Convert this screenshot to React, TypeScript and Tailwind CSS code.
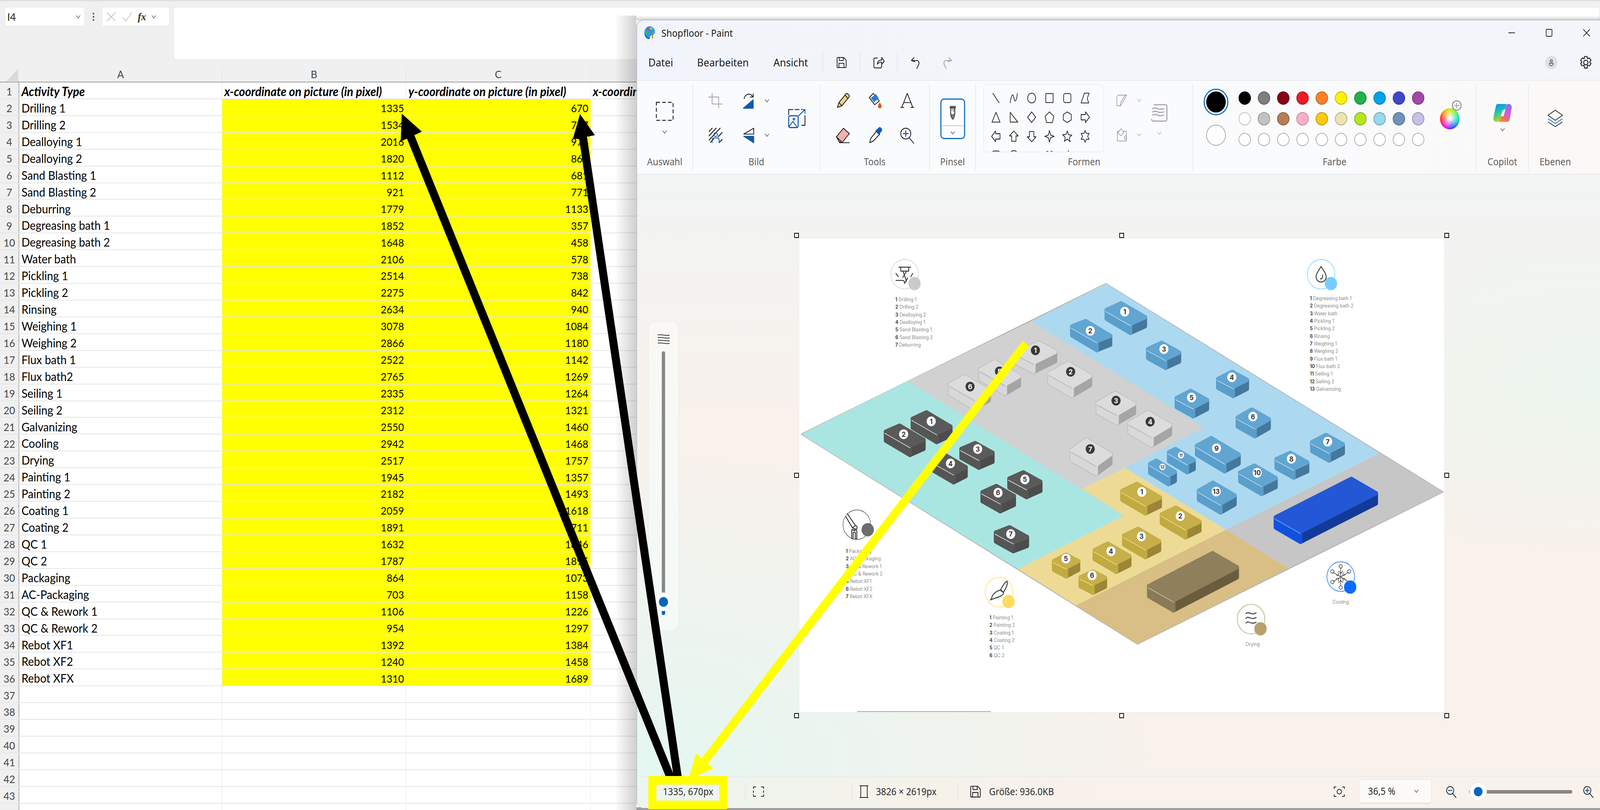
import { ReactNode } from 'react';

const SHEET = [
  ['Drilling 1', 1335, 670], ['Drilling 2', 1534, 757], ['Dealloying 1', 2016, 974], ['Dealloying 2', 1820, 868],
  ['Sand Blasting 1', 1112, 681], ['Sand Blasting 2', 921, 771], ['Deburring', 1779, 1133], ['Degreasing bath 1', 1852, 357],
  ['Degreasing bath 2', 1648, 458], ['Water bath', 2106, 578], ['Pickling 1', 2514, 738], ['Pickling 2', 2275, 842],
  ['Rinsing', 2634, 940], ['Weighing 1', 3078, 1084], ['Weighing 2', 2866, 1180], ['Flux bath 1', 2522, 1142],
  ['Flux bath2', 2765, 1269], ['Seiling 1', 2335, 1264], ['Seiling 2', 2312, 1321], ['Galvanizing', 2550, 1460],
  ['Cooling', 2942, 1468], ['Drying', 2517, 1757], ['Painting 1', 1945, 1357], ['Painting 2', 2182, 1493],
  ['Coating 1', 2059, 1618], ['Coating 2', 1891, 1711], ['QC 1', 1632, 1846], ['QC 2', 1787, 1895],
  ['Packaging', 864, 1073], ['AC-Packaging', 703, 1158], ['QC & Rework 1', 1106, 1226], ['QC & Rework 2', 954, 1297],
  ['Rebot XF1', 1392, 1384], ['Rebot XF2', 1240, 1458], ['Rebot XFX', 1310, 1689],
] as const;

const COLORS = [
  '#000000', '#7f7f7f', '#880015', '#ed1c24', '#ff7f27', '#fff200', '#22b14c', '#00a2e8', '#3f48cc', '#a349a4',
  '#ffffff', '#c3c3c3', '#b97a57', '#ffaec9', '#ffc90e', '#efe4b0', '#b5e61d', '#99d9ea', '#7092be', '#c8bfe7',
];

const SHAPES = [
  'M5 3L23 25', 'M4 25C7 6 12 2 14 13S21 24 24 3', 'M14 3a11 11 0 1 0 .01 0', 'M4 4h20v20H4z',
  'M8 4h12a4 4 0 0 1 4 4v12a4 4 0 0 1-4 4H8a4 4 0 0 1-4-4V8a4 4 0 0 1 4-4z', 'M12 3h13l-5 12 4 10H3z',
  'M14 3L25 25H3z', 'M4 3L25 25H4z', 'M14 2L25 14 14 26 3 14z', 'M14 2L26 12 22 26H6L2 12z', 'M14 2L25 8v12L14 26 3 20V8z',
  'M3 8h12V2l11 12-11 12v-6H3z', 'M25 8H13V2L2 14l11 12v-6h12z', 'M8 25V13H2L14 2l12 11h-6v12z', 'M8 3v12H2l12 11 12-11h-6V3z',
  'M14 1l3 10 10 3-10 3-3 10-3-10-10-3 10-3z', 'M14 2l3.5 8.5 9 .7-7 5.8 2.2 8.8L14 20l-7.7 5 2.2-8.8-7-5.8 9-.7z',
  'M14 1l3.5 6.5H25L21 14l4 6.5h-7.5L14 27l-3.5-6.5H3L7 14 3 7.5h7.5z',
  'M8 4h12a4 4 0 0 1 4 4v12H4V8a4 4 0 0 1 4-4z', 'M14 3a11 9 0 1 0 .01 0', 'M8 12a6 6 0 0 1 12 0v12H8z', 'M14 10C10 2 2 4 4 12c1 5 6 9 10 13 4-4 9-8 10-13 2-8-6-10-10-2z', 'M18 3L8 15h6l-4 10',
];

type Tone = 'gray' | 'dark' | 'blue' | 'gold' | 'navy' | 'brown';

const TONES: Record<Tone, { top: string; left: string; right: string; line: string; disc: string; num: string }> = {
  gray: { top: '#dcdcdc', left: '#d8d8d8', right: '#a5a5a5', line: '#ababab', disc: '#3a3a3a', num: '#ffffff' },
  dark: { top: '#5a5a5a', left: '#555555', right: '#4c4c4c', line: '#e8e8e8', disc: '#ffffff', num: '#333333' },
  blue: { top: '#61a5d1', left: '#5a9ecb', right: '#44789c', line: '#c2e4f7', disc: '#ffffff', num: '#333333' },
  gold: { top: '#c7af49', left: '#c2aa42', right: '#9c8536', line: '#f3e07e', disc: '#ffffff', num: '#333333' },
  navy: { top: '#2457d5', left: '#1151dc', right: '#123a98', line: '#6db0ff', disc: '#ffffff', num: '#333333' },
  brown: { top: '#8f7f5a', left: '#8a7a55', right: '#6a5d3e', line: '#d3c8a2', disc: '#ffffff', num: '#333333' },
};

// tone, label, left corner x/y, top corner x/y, right corner x, label x/y
type Box = [Tone, string, number, number, number, number, number, number, number];

const BOXES: Box[] = [
  ['gray', '1', 2786, 904, 2855, 869, 2907, 2845, 895],
  ['gray', '2', 2877, 955, 2933, 921, 3003, 2942, 950],
  ['gray', '5', 2687, 944, 2729, 918, 2807, 2746, 949],
  ['gray', '6', 2603, 982, 2646, 956, 2724, 2665, 988],
  ['gray', '3', 3010, 1031, 3064, 998, 3124, 3067, 1024],
  ['gray', '4', 3097, 1082, 3153, 1047, 3223, 3161, 1078],
  ['gray', '7', 2938, 1151, 2982, 1118, 3059, 2996, 1148],
  ['dark', '1', 2499, 1069, 2541, 1047, 2619, 2558, 1077],
  ['dark', '2', 2425, 1102, 2467, 1081, 2545, 2482, 1110],
  ['dark', '3', 2633, 1147, 2677, 1125, 2735, 2686, 1148],
  ['dark', '4', 2558, 1180, 2596, 1158, 2661, 2611, 1185],
  ['dark', '5', 2765, 1223, 2810, 1200, 2867, 2816, 1226],
  ['dark', '6', 2691, 1258, 2735, 1235, 2794, 2742, 1260],
  ['dark', '7', 2728, 1361, 2772, 1341, 2830, 2777, 1366],
  ['blue', '1', 3033, 790, 3078, 767, 3155, 3091, 796],
  ['blue', '2', 2938, 832, 2979, 813, 3059, 2996, 845],
  ['blue', '3', 3147, 891, 3191, 868, 3249, 3199, 892],
  ['blue', '4', 3340, 968, 3386, 942, 3436, 3386, 964],
  ['blue', '5', 3226, 1017, 3271, 991, 3326, 3275, 1016],
  ['blue', '6', 3394, 1067, 3439, 1039, 3496, 3444, 1065],
  ['blue', '7', 3599, 1130, 3644, 1104, 3700, 3650, 1129],
  ['blue', '8', 3501, 1173, 3545, 1150, 3602, 3550, 1173],
  ['blue', '9', 3282, 1138, 3325, 1113, 3413, 3344, 1146],
  ['blue', '10', 3401, 1207, 3445, 1183, 3515, 3456, 1209],
  ['blue', '11', 3205, 1154, 3226, 1142, 3289, 3246, 1164],
  ['blue', '12', 3153, 1184, 3173, 1172, 3237, 3195, 1194],
  ['blue', '13', 3287, 1254, 3331, 1227, 3402, 3343, 1257],
  ['gold', '1', 3076, 1254, 3121, 1230, 3196, 3138, 1258],
  ['gold', '2', 3185, 1314, 3228, 1291, 3305, 3244, 1320],
  ['gold', '3', 3081, 1369, 3124, 1345, 3194, 3137, 1372],
  ['gold', '4', 3000, 1406, 3041, 1383, 3112, 3053, 1410],
  ['gold', '5', 2888, 1435, 2929, 1411, 2971, 2929, 1429],
  ['gold', '6', 2961, 1477, 3003, 1454, 3045, 3001, 1472],
  ['navy', '', 3499, 1325, 3721, 1219, 3791, 0, 0],
  ['brown', '', 3150, 1501, 3338, 1409, 3408, 0, 0],
];

function Block({ tone, label, lx, ly, tx, ty, rx, nx, ny }: { tone: Tone; label: string; lx: number; ly: number; tx: number; ty: number; rx: number; nx: number; ny: number }) {
  const c = TONES[tone];
  const a = rx - tx;
  const raw = [[lx, ly], [tx, ty], [rx, ty + a * 0.58], [lx + a, ly + a * 0.58]];
  const cx = (lx + rx) / 2;
  const cy = (raw[0][1] + raw[1][1] + raw[2][1] + raw[3][1]) / 4;
  const [L, T, R, F] = raw.map(([x, y]) => {
    const d = Math.hypot(cx - x, cy - y);
    return [x + ((cx - x) * 8) / d, y + ((cy - y) * 8) / d];
  });
  const h = tone === 'navy' || tone === 'brown' ? 26 : 23;
  const pts = (list: number[][]) => list.map((p) => p.join(',')).join(' ');
  const small = label === '11' || label === '12';
  return (
    <g strokeLinejoin="round" strokeWidth={11}>
      {tone === 'gray' && (
        <polygon points={pts([L, T, R, [R[0], R[1] + h], [F[0], F[1] + h], [L[0], L[1] + h]])} fill={c.line} stroke={c.line} strokeWidth={13} />
      )}
      <polygon points={pts([F, R, [R[0], R[1] + h], [F[0], F[1] + h]])} fill={c.right} stroke={c.right} />
      <polygon points={pts([L, F, [F[0], F[1] + h], [L[0], L[1] + h]])} fill={c.left} stroke={c.left} />
      <polygon points={pts([L, T, R, F])} fill={c.top} stroke={c.top} />
      <line x1={L[0] - 3} y1={L[1] + 4} x2={F[0] + 1} y2={F[1] + 5} stroke={c.line} strokeWidth={1.6} />
      {label && (
        <>
          <circle cx={nx} cy={ny} r={small ? 8.5 : 12.5} fill={c.disc} />
          <text x={nx} y={ny + (small ? 4 : 6.5)} textAnchor="middle" fontFamily="Inter, sans-serif" fontWeight={700} fontSize={small ? 11 : 18} fill={c.num}>
            {label}
          </text>
        </>
      )}
    </g>
  );
}

function Ico({ size = 44, box = 32, children, className = '' }: { size?: number; box?: number; children: ReactNode; className?: string }) {
  return (
    <svg width={size} height={size} viewBox={`0 0 ${box} ${box}`} fill="none" stroke="#222" strokeWidth={1.6} strokeLinejoin="round" strokeLinecap="round" className={`shrink-0 ${className}`}>
      {children}
    </svg>
  );
}

function Chevron({ className = '' }: { className?: string }) {
  return (
    <svg width="14" height="10" viewBox="0 0 14 10" fill="none" stroke="#555" strokeWidth="1.5" className={`shrink-0 ${className}`}>
      <path d="M1.5 1.5L7 8l5.5-6.5" />
    </svg>
  );
}

function Group({ width, label, children }: { width: string; label: string; children: ReactNode }) {
  return (
    <div className={`${width} h-[222px] flex flex-col border-r-2 border-[#e9ebee] last:border-r-0 shrink-0`}>
      <div className="h-[176px] flex">{children}</div>
      <div className="h-[46px] flex items-center justify-center text-[24.5px] text-[#5f5f5f]">{label}</div>
    </div>
  );
}

function Sep() {
  return <div className="w-[2px] h-[48px] bg-[#e5e7ea] shrink-0" />;
}

function MarkerIcon() {
  return (
    <Ico size={40} box={28}>
      <path d="M9 3h10v3H9z" fill="#555" stroke="#555" />
      <path d="M10 6v10c0 5 3 9 4 10 1-1 4-5 4-10V6" stroke="#333" />
      <path d="M10.5 16c2 1 5 1 7 0 0 4-2 8-3.500 9.500C12.500 24 10.500 20 10.500 16z" fill="#777" stroke="none" />
      <path d="M13 7v4M16 7v6" stroke="#888" />
    </Ico>
  );
}

function Legend({ className, items }: { className: string; items: string[] }) {
  return (
    <div className={`absolute font-[Inter] text-[12.5px] leading-[19.35px] text-[#8a8a8a] whitespace-nowrap ${className}`}>
      {items.map((t, i) => (
        <div key={t}>
          <span className="font-bold text-[#444]">{i + 1}</span> {t}
        </div>
      ))}
    </div>
  );
}

function Ring({ cx, cy, ring, dot, dx = 27, dy = 24, thin, children }: { cx: number; cy: number; ring: string; dot: string; dx?: number; dy?: number; thin?: boolean; children: ReactNode }) {
  return (
    <g>
      <circle cx={cx} cy={cy} r={38} fill="#fff" stroke={ring} strokeWidth={1.6} />
      <g fill="none" stroke="#444" strokeWidth={thin ? 1.6 : 2.6} strokeLinecap="round" strokeLinejoin="round" transform={`translate(${cx} ${cy})`}>
        {children}
      </g>
      <circle cx={cx + dx} cy={cy + dy} r={17} fill={dot} />
    </g>
  );
}

function FactoryMap() {
  return (
    <svg viewBox="2195 608 1776 1215" className="absolute inset-0 w-full h-full">
      <polygon points="2200,1110 3039,724 3968,1258 3126,1648" fill="#cfcfcf" stroke="#b4b4b4" strokeWidth={3} strokeLinejoin="round" />
      <polygon points="2200,1110 2494,974 3089,1319 2797,1456" fill="#aae6e1" />
      <polygon points="2494,974 2834,820 3309,1093 3092,1196 2973,1250" fill="#d1d1d1" />
      <polygon points="2834,820 3039,724 3794,1159 3370,1355 3092,1196 3309,1093" fill="#acd9f0" />
      <polygon points="2973,1250 3092,1196 3370,1355 2957,1549 2797,1456 3089,1319" fill="#eddb95" />
      <polygon points="3370,1355 3541,1454 3126,1648 2957,1549" fill="#d9be85" />
      <polygon points="3794,1159 3968,1258 3541,1454 3370,1355" fill="#c6c6c6" />
      {BOXES.map(([tone, label, lx, ly, tx, ty, rx, nx, ny]) => (
        <Block key={`${tone}${label}`} tone={tone} label={label} lx={lx} ly={ly} tx={tx} ty={ty} rx={rx} nx={nx} ny={ny} />
      ))}

      <Ring cx={2485} cy={700} ring="#d4d4d4" dot="#cacaca">
        <path d="M-16 -18H16M-11 -18V-8H11V-18M-5 -8L5 18M5 -8L-5 8M-24 -2L-18 6M22 -2L17 6M-24 16H-5C-2 16 0 20 0 24M0 24C0 20 6 14 8 10" />
      </Ring>
      <Ring cx={3632} cy={700} ring="#7fd0ff" dot="#77ccff">
        <path d="M0 -20C-6 -10 -14 -2 -14 6A14 14 0 0 0 14 6C14 -2 6 -10 0 -20ZM4 2C5 8 2 12 -2 12" />
      </Ring>
      <Ring cx={2353} cy={1342} ring="#666666" dot="#6c6c6c" dx={30} dy={13}>
        <path d="M-26 -28L-4 2M-30 -20L-12 8M-4 2L-12 8M-4 2C2 4 2 10 -2 12L-12 8M-7 10V16M-14 36V14C-14 10 -10 14 -7 16C-4 14 0 12 0 16V36H-4V20H-10V36Z" />
      </Ring>
      <Ring cx={2745} cy={1515} ring="#ffdc5e" dot="#ffdc5e" dx={26} dy={24}>
        <path d="M22 -28C24 -24 22 -14 12 0L4 -6C10 -16 16 -26 22 -28ZM3 -5L12 1C12 6 8 8 4 10C-4 14 -14 16 -24 20C-20 18 -20 8 -14 4C-10 0 -4 -4 3 -5Z" />
      </Ring>
      <Ring cx={3686} cy={1475} ring="#1a75ff" dot="#0a6cff" dx={26} dy={27} thin>
        <path d="M0 -22V24M-21 -11L21 13M-21 13L21 -11M-6 -14L0 -8L6 -14M-6 16L0 10L6 16M-12 -4L-5 -2L-7 -10M12 -4L5 -2L7 -10M-12 6L-5 4L-7 12M12 6L5 4L7 12" />
        <circle cx="0" cy="-26" r="4.500" />
        <circle cx="0" cy="28" r="4.500" />
        <circle cx="-23" cy="-13" r="4.500" />
        <circle cx="23" cy="-13" r="4.500" />
        <circle cx="-23" cy="14" r="4.500" />
      </Ring>
      <Ring cx={3439} cy={1584} ring="#b5a570" dot="#b5a26f" dx={26} dy={25}>
        <path d="M-14 -14C-8 -22 0 -8 14 -16M-14 -2C-8 -10 0 4 14 -4M-14 10C-8 2 0 16 14 8" />
      </Ring>
      <line x1="2354" y1="1821" x2="2722" y2="1821" stroke="#888" strokeWidth="1.5" />
    </svg>
  );
}

function PaintWindow() {
  return (
    <div className="absolute left-[1750px] top-[50px] w-[2650px] h-[2018px] rounded-l-[20px] overflow-hidden flex flex-col font-['Noto_Sans',sans-serif] text-[#1c1c1c] border-l-2 border-t-2 border-[#b8bcc0] bg-[#f3f4f6]">
      {/* title bar */}
      <div className="h-[152px] shrink-0 bg-[linear-gradient(90deg,#f1f4fa,#f4f5fb_60%,#f2f5f9)]">
        <div className="h-[64px] flex items-center pl-[18px] pr-[26px]">
          <svg width="34" height="36" viewBox="0 0 34 36" className="shrink-0">
            <path d="M17 1C7 1 2 10 2 18c0 9 6 16 13 16 3 0 2-5 4-8 2-2 5-1 8-3 4-3 5-8 3-13C27 4 22 1 17 1z" fill="#1f9ee8" />
            <path d="M2 18c0 9 6 16 13 16 1 0 1.500-1 2-2-5-2-12-6-15-14z" fill="#0c6bb8" />
            <circle cx="12" cy="9" r="3.500" fill="#e8463f" />
            <circle cx="8" cy="18" r="3.500" fill="#43b649" />
            <circle cx="21" cy="7" r="3" fill="#f5c623" />
            <path d="M27 14l-3 14" stroke="#c98a3d" strokeWidth="3" />
            <path d="M22 27l4 1-1 7z" fill="#a36a2e" />
          </svg>
          <span className="ml-[15px] text-[25px] leading-none">Shopfloor - Paint</span>
          <div className="ml-auto flex items-center gap-[81px]">
            <svg width="22" height="22" viewBox="0 0 22 22" stroke="#222" strokeWidth="1.800" fill="none"><path d="M2 11h18" /></svg>
            <svg width="22" height="22" viewBox="0 0 22 22" stroke="#222" strokeWidth="1.800" fill="none"><rect x="3" y="2" width="16" height="18" rx="2.500" /></svg>
            <svg width="22" height="22" viewBox="0 0 22 22" stroke="#222" strokeWidth="1.800" fill="none"><path d="M2 2l18 18M20 2L2 20" /></svg>
          </div>
        </div>
        <div className="h-[88px] flex items-center pl-[31px] pr-[20px] text-[27.5px]">
          <span className="w-[70px]">Datei</span>
          <span className="ml-[64px] w-[145px]">Bearbeiten</span>
          <span className="ml-[65px] w-[100px]">Ansicht</span>
          <div className="ml-[35px] mr-[34px]"><Sep /></div>
          <Ico size={32} box={32}>
            <path d="M6 3h16l7 7v17a2 2 0 0 1-2 2H6a2 2 0 0 1-2-2V5a2 2 0 0 1 2-2zM10 3v8h11V3M9 29V18h14v11" strokeWidth={2} />
          </Ico>
          <div className="ml-[34px] mr-[33px]"><Sep /></div>
          <Ico size={34} box={32}>
            <path d="M13 5H7a3 3 0 0 0-3 3v18a3 3 0 0 0 3 3h14a3 3 0 0 0 3-3v-3M13 20c0-7 5-10 11-10V4l7 9-7 8v-6c-5 0-8 1-11 5z" strokeWidth={2} />
          </Ico>
          <div className="ml-[33px] mr-[33px]"><Sep /></div>
          <Ico size={34} box={32}>
            <path d="M5 11l7-7M5 11l9 3M5 11h13c6 0 8 5 6 10l-5 9" strokeWidth={2} />
          </Ico>
          <Ico size={34} box={32} className="ml-[53px] opacity-40">
            <path d="M27 11l-7-7M27 11l-9 3M27 11H14c-6 0-8 5-6 10l5 9" strokeWidth={2} />
          </Ico>
          <div className="ml-auto flex items-center gap-[59px]">
            <div className="w-[34px] h-[34px] rounded-full bg-[#dfe0e3] flex items-center justify-center">
              <svg width="14" height="18" viewBox="0 0 14 18" fill="none" stroke="#333" strokeWidth="1.500"><circle cx="7" cy="5" r="3" /><path d="M2 11h10v2a4 4 0 0 1-4 4H6a4 4 0 0 1-4-4z" /></svg>
            </div>
            <Ico size={38} box={32}>
              <circle cx="16" cy="16" r="5" strokeWidth={2} />
              <path d="M13 3h6l1 5 4-2 4 5-3 4 3 3-3 5-5-1-1 6h-6l-1-6-5 1-3-5 3-3-3-4 4-5 4 2z" strokeWidth={2} />
            </Ico>
          </div>
        </div>
      </div>

      {/* ribbon */}
      <div className="h-[243px] shrink-0 flex pt-[8px] border-y-[3px] border-[#eceef0] bg-[linear-gradient(90deg,#fafbfd,#fafbfd_70%,#fbf8f6)]">
        <Group width="w-[154px]" label="Auswahl">
          <div className="w-full flex flex-col items-center pt-[45px]">
            <svg width="50" height="50" viewBox="0 0 50 50" fill="none" stroke="#222" strokeWidth="2.400"><rect x="2" y="2" width="46" height="46" strokeDasharray="10 6" /></svg>
            <Chevron className="mt-[23px]" />
          </div>
        </Group>
        <Group width="w-[350px]" label="Bild">
          <div className="flex pl-[40px] pt-[21px]">
            <div className="flex flex-col gap-[44px]">
              <div className="flex items-center">
                <Ico box={32} className="opacity-40">
                  <path d="M9 2v20h20M2 9h20v20" strokeWidth={1.500} />
                </Ico>
                <Ico box={32} className="ml-[47px]">
                  <path d="M7 12A9 9 0 0 1 22 6l3 3M25 3v6h-6" />
                  <path d="M5 30L25 14v16z" fill="#0f5ab0" stroke="#0f5ab0" />
                </Ico>
                <Chevron className="ml-[21px]" />
              </div>
              <div className="flex items-center">
                <Ico box={32}>
                  <path d="M3 9l6-6M3 17L17 3M3 25L25 3M29 11l-8 8M6 29l6-6M24 29l5-5" strokeWidth={1.800} />
                  <circle cx="16" cy="15" r="3.500" stroke="#0f5ab0" />
                  <path d="M9 30v-5a4 4 0 0 1 4-4h6a4 4 0 0 1 4 4v5" stroke="#0f5ab0" />
                </Ico>
                <Ico box={32} className="ml-[47px]">
                  <path d="M26 3v11H6z" />
                  <path d="M26 30V18H6z" fill="#0f5ab0" stroke="#0f5ab0" />
                </Ico>
                <Chevron className="ml-[21px]" />
              </div>
            </div>
            <div className="ml-[50px] mt-[40px]">
              <Ico size={52} box={36}>
                <path d="M2 12V3h8M14 3h8M33 14v17h-6" stroke="#222" />
                <path d="M21 14L33 3M26 3h7v7" stroke="#0f5ab0" />
                <rect x="2" y="14" width="18" height="21" rx="3" stroke="#0f5ab0" strokeWidth={2} />
                <circle cx="12" cy="20" r="1.500" stroke="#0f5ab0" />
                <path d="M3 33l7-9 8 10" stroke="#0f5ab0" />
              </Ico>
            </div>
          </div>
        </Group>
        <Group width="w-[301px]" label="Tools">
          <div className="grid grid-cols-[88.5px_88.5px_88.5px] grid-rows-[44px_44px] gap-y-[45px] pl-[18px] pt-[20px] justify-items-center">
            <Ico box={32}>
              <path d="M5 29l3-9L22 4c1-1 3-1 4 0l2 2c1 1 1 3 0 4L14 26z" fill="#f6cf85" />
              <path d="M8 20l6 6M20 6l6 6" />
            </Ico>
            <Ico box={32}>
              <path d="M12 3L24 17 15 24 4 11z" fill="#fff" />
              <path d="M8 12L17 5l5 7-8 6z" fill="#2d7cd0" stroke="#2d7cd0" />
              <path d="M25 21c-2 3-3 4-3 6a3 3 0 0 0 6 0c0-2-1-3-3-6z" fill="#e2591c" stroke="#e2591c" />
            </Ico>
            <Ico box={32}>
              <path d="M5 29L16 3l11 26M9 20h14M3 29h6M23 29h6" />
            </Ico>
            <Ico box={32}>
              <path d="M3 19L17 3l12 10-14 16H9z" fill="#f4b0ae" />
              <path d="M3 19l10 9M9 30h20" />
            </Ico>
            <Ico box={32}>
              <path d="M19 8l6 6-13 13-7 3 2-8z" fill="#fff" />
              <path d="M17 8L24 2c2-1 5 2 5 5l-6 7z" fill="#0f5ab0" stroke="#0f5ab0" />
            </Ico>
            <Ico box={32}>
              <circle cx="13" cy="13" r="10" />
              <path d="M20 21l9 10" />
              <path d="M13 8v10M8 13h10" stroke="#0f5ab0" strokeWidth={2} />
            </Ico>
          </div>
        </Group>
        <Group width="w-[127px]" label="Pinsel">
          <div className="w-full flex justify-center pt-[37px]">
            <div className="w-[68px] h-[104px] rounded-[10px] border-[3px] border-[#0f6cbd] bg-[#fdfdfe] flex flex-col items-center">
              <div className="h-[66px] flex items-center"><MarkerIcon /></div>
              <div className="w-[58px] h-[2px] bg-[#c9cbce]" />
              <Chevron className="mt-[12px]" />
            </div>
          </div>
        </Group>
        <Group width="w-[597px]" label="Formen">
          <div className="ml-[20px] w-[332px] h-[175px] rounded-[10px] border-2 border-[#eceef0] overflow-hidden pl-[8px] pt-[9px] shrink-0">
            <div className="grid grid-cols-[repeat(6,49px)] auto-rows-[49px] place-items-center">
              {SHAPES.map((d) => (
                <svg key={d} width="28" height="32" viewBox="0 0 28 28" preserveAspectRatio="none" fill="none" stroke="#222" strokeWidth="1.800" strokeLinejoin="round"><path d={d} /></svg>
              ))}
            </div>
          </div>
          <div className="ml-[31px] flex flex-col gap-[52px] pt-[24px] opacity-40">
            <div className="flex items-center gap-[23px]">
              <Ico size={36} box={32}><path d="M26 4H8a4 4 0 0 0-4 4v20h8M28 4L14 27l-2 2 1-8L25 3z" /></Ico>
              <Chevron />
            </div>
            <div className="flex items-center gap-[23px]">
              <Ico size={36} box={32}><path d="M10 8H5v22h22V8h-8M14 2L6 12l8 6 7-7zM25 18c-2 2-3 4-3 5a3 3 0 0 0 6 0c0-1-1-3-3-5z" /></Ico>
              <Chevron />
            </div>
          </div>
          <div className="ml-[23px] flex flex-col items-center pt-[49px] opacity-40">
            <Ico size={50} box={36}><path d="M8 3h22a3 3 0 0 1 3 3v24a3 3 0 0 1-3 3H6a3 3 0 0 1-3-3M5 10c8-4 10 4 22 0M5 16c8-4 10 4 22 0M5 22c8-4 10 4 22 0" strokeWidth={2} /></Ico>
            <Chevron className="mt-[22px]" />
          </div>
        </Group>
        <Group width="w-[780px]" label="Farbe">
          <div className="flex pl-[29px]">
            <div className="flex flex-col items-center pt-[12px] gap-[24px]">
              <div className="w-[68px] h-[68px] rounded-full border-[3px] border-[#0f6cbd] bg-white flex items-center justify-center">
                <div className="w-[54px] h-[54px] rounded-full bg-black" />
              </div>
              <div className="w-[54px] h-[54px] rounded-full bg-white border-2 border-[#a8a8a8]" />
            </div>
            <div className="ml-[18px] pt-[9px] grid grid-cols-[repeat(10,53px)] grid-rows-[repeat(3,53px)] place-items-center">
              {COLORS.map((c) => (
                <div key={c} style={{ backgroundColor: c }} className="w-[34px] h-[34px] rounded-full border-2 border-[#00000040]" />
              ))}
              {Array.from({ length: 10 }, (_, i) => (
                <div key={i} className="w-[34px] h-[34px] rounded-full border-2 border-[#b0b0b0] bg-white" />
              ))}
            </div>
            <div className="ml-[34px] pt-[62px]">
              <div className="relative w-[54px] h-[54px] rounded-full bg-[radial-gradient(circle,#ffffff_0%,#ffffff00_70%),conic-gradient(#c7f000,#00e0c0_90deg,#2040ff_160deg,#f000e0_210deg,#ff2020_270deg,#ffa000_320deg,#c7f000)]">
                <div className="absolute right-[-5px] top-[-20px] w-[26px] h-[26px] rounded-full bg-[#f3f3f3] border-2 border-[#777] flex items-center justify-center">
                  <svg width="16" height="16" viewBox="0 0 16 16" stroke="#888" strokeWidth="1.500"><path d="M8 1v14M1 8h14" /></svg>
                </div>
              </div>
            </div>
          </div>
        </Group>
        <Group width="w-[143px]" label="Copilot">
          <div className="w-full flex flex-col items-center pt-[50px]">
            <svg width="52" height="48" viewBox="0 0 52 48">
              <defs>
                <linearGradient id="cpA" x1="0.2" y1="0" x2="0.5" y2="1"><stop offset="0" stopColor="#0f8fe8" /><stop offset="0.45" stopColor="#1cc7b0" /><stop offset="0.75" stopColor="#7ed04b" /><stop offset="1" stopColor="#fbc02d" /></linearGradient>
                <linearGradient id="cpB" x1="0.7" y1="0" x2="0.4" y2="1"><stop offset="0" stopColor="#8a6cf0" /><stop offset="0.55" stopColor="#d85bd0" /><stop offset="0.85" stopColor="#f0705a" /><stop offset="1" stopColor="#f9902f" /></linearGradient>
              </defs>
              <path d="M39 47H19c-2 0-3-1-3-3l6-12c3-3 6-5 8-9l5-16c1-4 4-6 8-6 6 0 9 5 8 11l-5 26c-1 6-3 9-7 9z" fill="url(#cpB)" />
              <path d="M13 1H37l-4 12c-2 3-5 4-7 8l-6 18c-2 5-5 8-10 8C3 47 0 42 1 36L7 9c1-5 3-8 6-8z" fill="url(#cpA)" />
              <path d="M26 18l8-3-5 17-8 1z" fill="#ffffff" />
            </svg>
            <Chevron className="mt-[14px]" />
          </div>
        </Group>
        <Group width="w-[146px]" label="Ebenen">
          <div className="w-full flex justify-center pt-[66px]">
            <svg width="44" height="44" viewBox="0 0 44 44" fill="none" strokeWidth="2" strokeLinejoin="round" stroke="#222">
              <path d="M22 1l20 13-20 13L2 14z" />
              <path d="M2 23l20 12 20-12" stroke="#0f6cbd" />
              <path d="M2 31l20 12 20-12" />
            </svg>
          </div>
        </Group>
      </div>

      {/* canvas */}
      <div className="relative flex-1 bg-[radial-gradient(ellipse_at_0%_100%,#e4f7f1_0%,#e4f7f100_38%),radial-gradient(ellipse_at_100%_35%,#ecf6ee_0%,#ecf6ee00_30%),linear-gradient(180deg,#f1f4f3_0%,#f8f1ec_40%,#f8f1ec_100%)]">
        <div className="absolute left-[30px] top-[375px] w-[85px] h-[793px] rounded-[20px] border-2 border-[#eeeeec] bg-[linear-gradient(180deg,#f9f8f4,#f3faf7)] flex flex-col items-center">
          <svg width="34" height="28" viewBox="0 0 34 28" fill="none" stroke="#222" strokeWidth="1.800" className="mt-[30px]">
            <path d="M1 3c10-2 20 3 32 1M1 10c10-2 20 3 32 1M1 17c10-2 20 3 32 1M1 24c10-2 20 3 32 1" />
          </svg>
          <div className="relative mt-[17px] w-[9px] h-[675px] rounded-full bg-[#868886]">
            <div className="absolute left-0 bottom-0 w-[9px] h-[32px] rounded-b-full bg-[#0067c0]" />
            <div className="absolute left-[-20px] bottom-[10px] w-[48px] h-[48px] rounded-full bg-white border border-[#e5e5e5] flex items-center justify-center">
              <div className="w-[25px] h-[25px] rounded-full bg-[#0067c0]" />
            </div>
          </div>
        </div>
        <div className="absolute left-[445px] top-[162px] w-[1776px] h-[1215px] bg-white border border-[#e4e4e4]">
          <FactoryMap />
          <Legend className="left-[264px] top-[147px]" items={['Drilling 1', 'Drilling 2', 'Dealloying 2', 'Dealloying 1', 'Sand Blasting 1', 'Sand Blasting 2', 'Deburring']} />
          <Legend className="left-[1404px] top-[144px]" items={['Degreasing  bath 1', 'Degreasing  bath 2', 'Water bath', 'Pickling 1', 'Pickling 2', 'Rinsing', 'Weighing 1', 'Weighing 2', 'Flux bath 1', 'Flux bath 2', 'Seiling 1', 'Seiling 2', 'Galvanizing']} />
          <Legend className="left-[128px] top-[791px]" items={['Packaging', 'AC-Packaging', 'QC & Rework 1', 'QC & Rework 2', 'Rebot XF1', 'Rebot XF2', 'Rebot XFX']} />
          <Legend className="left-[523px] top-[961px]" items={['Painting 1', 'Painting 2', 'Coating 1', 'Coating 2', 'QC 1', 'QC 2']} />
          <div className="absolute left-[1439px] top-[921px] w-[100px] text-center font-[Inter] text-[12.5px] leading-[19px] text-[#8a8a8a]">Cooling</div>
          <div className="absolute left-[1197px] top-[1029px] w-[100px] text-center font-[Inter] text-[12.5px] leading-[19px] text-[#8a8a8a]">Drying</div>
        </div>
        {[
          'left-[432px] top-[149px]', 'left-[1326px] top-[149px]', 'left-[2220px] top-[149px]',
          'left-[432px] top-[763px]', 'left-[2220px] top-[763px]',
          'left-[432px] top-[1378px]', 'left-[1326px] top-[1378px]', 'left-[2220px] top-[1378px]',
        ].map((pos) => (
          <div key={pos} className={`absolute ${pos} w-[13px] h-[13px] bg-white border-[2.5px] border-black`} />
        ))}
      </div>

      {/* status bar */}
      <div className="h-[82px] shrink-0 flex items-center border-t-[3px] border-[#ecedee] text-[24.5px] text-[#2a2a2a] pb-[5px] bg-[linear-gradient(90deg,#ecf6f0,#f5f2ea_28%,#f9f1ec_50%)]">
        <div className="w-[299px] h-full flex items-center justify-between pl-[71px] shrink-0">
          <span>1335, 670px</span>
          <Sep />
        </div>
        <div className="w-[292px] h-full flex items-center justify-between pl-[19px] shrink-0">
          <svg width="32" height="30" viewBox="0 0 32 30" fill="none" stroke="#222" strokeWidth="2"><path d="M2 8V3h7M23 3h7v5M2 22v5h7M23 27h7v-5M2 12v6M30 12v6" /></svg>
          <Sep />
        </div>
        <div className="w-[292px] h-full flex items-center justify-between pl-[17px] shrink-0">
          <div className="flex items-center gap-[17px]">
            <svg width="32" height="34" viewBox="0 0 32 34" fill="none" stroke="#222" strokeWidth="2"><path d="M4 2h24M4 32h24M7 2v30M25 2v30" /></svg>
            <span>3826 × 2619px</span>
          </div>
          <Sep />
        </div>
        <div className="flex items-center pl-[30px] gap-[21px]">
          <Ico size={34} box={32}>
            <path d="M6 3h16l7 7v17a2 2 0 0 1-2 2H6a2 2 0 0 1-2-2V5a2 2 0 0 1 2-2zM10 3v8h11V3M9 29V18h14v11" strokeWidth={2} />
          </Ico>
          <span>Größe: 936.0KB</span>
        </div>
        <div className="ml-auto flex items-center pr-[16px]">
          <svg width="32" height="30" viewBox="0 0 32 30" fill="none" stroke="#222" strokeWidth="2"><path d="M2 8V3h6M24 3h6v5M2 22v5h6M24 27h6v-5" /><circle cx="16" cy="15" r="6" /></svg>
          <div className="ml-[38px] w-[200px] h-[62px] rounded-[8px] bg-[#fcfbf9] border border-[#e6e2dd] border-b-[3px] flex items-center pl-[24px] pr-[34px] justify-between">
            <span>36,5 %</span>
            <Chevron />
          </div>
          <div className="ml-[38px]">
            <Ico size={32} box={32}>
              <circle cx="13" cy="13" r="10" strokeWidth={2} />
              <path d="M20 21l9 10" strokeWidth={2} />
              <path d="M8 13h10" stroke="#0f5ab0" strokeWidth={2.500} />
            </Ico>
          </div>
          <div className="relative ml-[33px] w-[284px] h-[9px] rounded-full bg-[#8a8683]">
            <div className="absolute left-0 top-0 w-[25px] h-[9px] rounded-l-full bg-[#0067c0]" />
            <div className="absolute left-[1px] top-[-20px] w-[48px] h-[48px] rounded-full bg-white border border-[#e5e0da] flex items-center justify-center">
              <div className="w-[24px] h-[24px] rounded-full bg-[#0067c0]" />
            </div>
          </div>
          <div className="ml-[28px]">
            <Ico size={32} box={32}>
              <circle cx="13" cy="13" r="10" strokeWidth={2} />
              <path d="M20 21l9 10" strokeWidth={2} />
              <path d="M13 8v10M8 13h10" stroke="#0f5ab0" strokeWidth={2.500} />
            </Ico>
          </div>
        </div>
      </div>
    </div>
  );
}

function Cell({ className = '', children }: { className?: string; children?: ReactNode }) {
  return <div className={`h-full flex items-center pt-[5px] px-[6px] whitespace-nowrap overflow-hidden shrink-0 ${className}`}>{children}</div>;
}

function Sheet() {
  const rows = Array.from({ length: 44 }, (_, i) => i + 1);
  return (
    <div className="font-[Lato] text-[27.5px] text-black">
      <div className="h-[170px] bg-[#f0f0f0] border-t-[3px] border-[#dedede] flex items-start pt-[15px] pl-[13px]">
        <div className="w-[220px] h-[49px] bg-white border border-[#e2e2e2] rounded-[6px] flex items-center justify-between pl-[6px] pr-[10px]">
          <span className="text-[#222]">I4</span>
          <Chevron />
        </div>
        <div className="w-[47px] h-[49px] flex flex-col items-center justify-center gap-[4px]">
          <div className="w-[4px] h-[4px] bg-[#555]" />
          <div className="w-[4px] h-[4px] bg-[#555]" />
          <div className="w-[4px] h-[4px] bg-[#555]" />
        </div>
        <div className="w-[186px] h-[49px] bg-white border border-[#e2e2e2] rounded-[6px] flex items-center pl-[10px] gap-[14px]">
          <svg width="30" height="26" viewBox="0 0 30 26" stroke="#c4c4c4" strokeWidth="2" fill="none"><path d="M3 2l24 22M27 2L3 24" /></svg>
          <svg width="30" height="26" viewBox="0 0 30 26" stroke="#c4c4c4" strokeWidth="2" fill="none"><path d="M3 14l8 10L27 2" /></svg>
          <span className="font-['Liberation_Serif',serif] italic font-bold text-[#333]">fx</span>
          <Chevron />
        </div>
        <div className="ml-[11px] flex-1 h-[135px] bg-white border border-[#dedede] rounded-[8px]" />
      </div>

      <div className="h-[41px] flex bg-[#f0f0f0] border-b-2 border-[#9e9e9e] text-[#444]">
        <div className="w-[53px] shrink-0 relative">
          <div className="absolute left-[18px] top-[6px] w-0 h-0 border-b-[32px] border-l-[32px] border-b-[#d9d9d9] border-l-transparent" />
        </div>
        <div className="w-[558px] flex items-center justify-center border-r border-[#dcdcdc]">A</div>
        <div className="w-[506px] flex items-center justify-center border-r border-[#dcdcdc]">B</div>
        <div className="w-[507px] flex items-center justify-center border-r border-[#dcdcdc]">C</div>
        <div className="w-[506px] flex items-center justify-center">D</div>
      </div>

      {rows.map((n) => {
        const row = SHEET[n - 2];
        const line = 'border-r border-[#e5e5e5]';
        return (
          <div key={n} className="h-[42.93px] flex border-b-2 border-[#e6e6e6] bg-white">
            <Cell className="w-[53px] bg-[#f0f0f0] justify-center text-[#444] !px-0 border-r-2 border-[#a8a8a8]">{n < 44 ? n : ''}</Cell>
            {n === 1 ? (
              <>
                <Cell className={`w-[558px] font-bold italic text-[32px] ${line}`}>Activity Type</Cell>
                <Cell className={`w-[506px] font-bold italic text-[32px] ${line}`}>x-coordinate on picture (in pixel)</Cell>
                <Cell className={`w-[507px] font-bold italic text-[32px] ${line}`}>y-coordinate on picture (in pixel)</Cell>
                <Cell className="w-[506px] font-bold italic text-[32px]">x-coordinate on</Cell>
              </>
            ) : row ? (
              <>
                <Cell className={`w-[558px] text-[30.5px] ${line}`}>{row[0]}</Cell>
                <Cell className="w-[506px] justify-end bg-[#ffff00]">{row[1]}</Cell>
                <Cell className="w-[507px] justify-end bg-[#ffff00]">{row[2]}</Cell>
                <Cell className="w-[506px]" />
              </>
            ) : (
              <>
                <Cell className={`w-[558px] ${line}`} />
                <Cell className={`w-[506px] ${line}`} />
                <Cell className={`w-[507px] ${line}`} />
                <Cell className="w-[506px]" />
              </>
            )}
          </div>
        );
      })}
    </div>
  );
}

export default function App() {
  // the browser window can be narrower than the 4400px the layout is built for
  const fit = Math.min(1, window.innerWidth / 4400);
  return (
    <div className="w-screen h-[2073px] overflow-hidden">
      <div style={{ transform: `scaleX(${fit})` }} className="relative w-[4400px] h-[2073px] origin-top-left overflow-hidden bg-white">
        <Sheet />
        <div className="absolute left-[1690px] top-[40px] w-[60px] h-[2033px] bg-[linear-gradient(90deg,#00000000,#00000030)]" />
        <div className="absolute left-[1750px] top-[40px] right-0 h-[12px] bg-[linear-gradient(180deg,#00000000,#00000030)]" />
        <div className="absolute left-[1750px] top-[2066px] right-0 h-[7px] bg-[#9c9c9c]" />
        <PaintWindow />

        {/* annotation arrows */}
        <svg viewBox="0 0 4400 2073" className="absolute inset-0 w-full h-full pointer-events-none">
          <path d="M1127 345L1844 1990" stroke="#000" strokeWidth="22" />
          <polygon points="1105,291 1160,337 1102,362" fill="#000" />
          <path d="M1603 350L1864 1990" stroke="#000" strokeWidth="22" />
          <polygon points="1595,292 1636,346 1575,357" fill="#000" />
          <path d="M2821 879L1925 1963" stroke="#ffff00" strokeWidth="22" />
          <polygon points="1914,1928 1961,1967 1893,1995" fill="#ffff00" />
        </svg>
        <div className="absolute left-[1783px] top-[1986px] w-[217px] h-[85px] border-[22px] border-[#ffff00]" />
      </div>
    </div>
  );
}
